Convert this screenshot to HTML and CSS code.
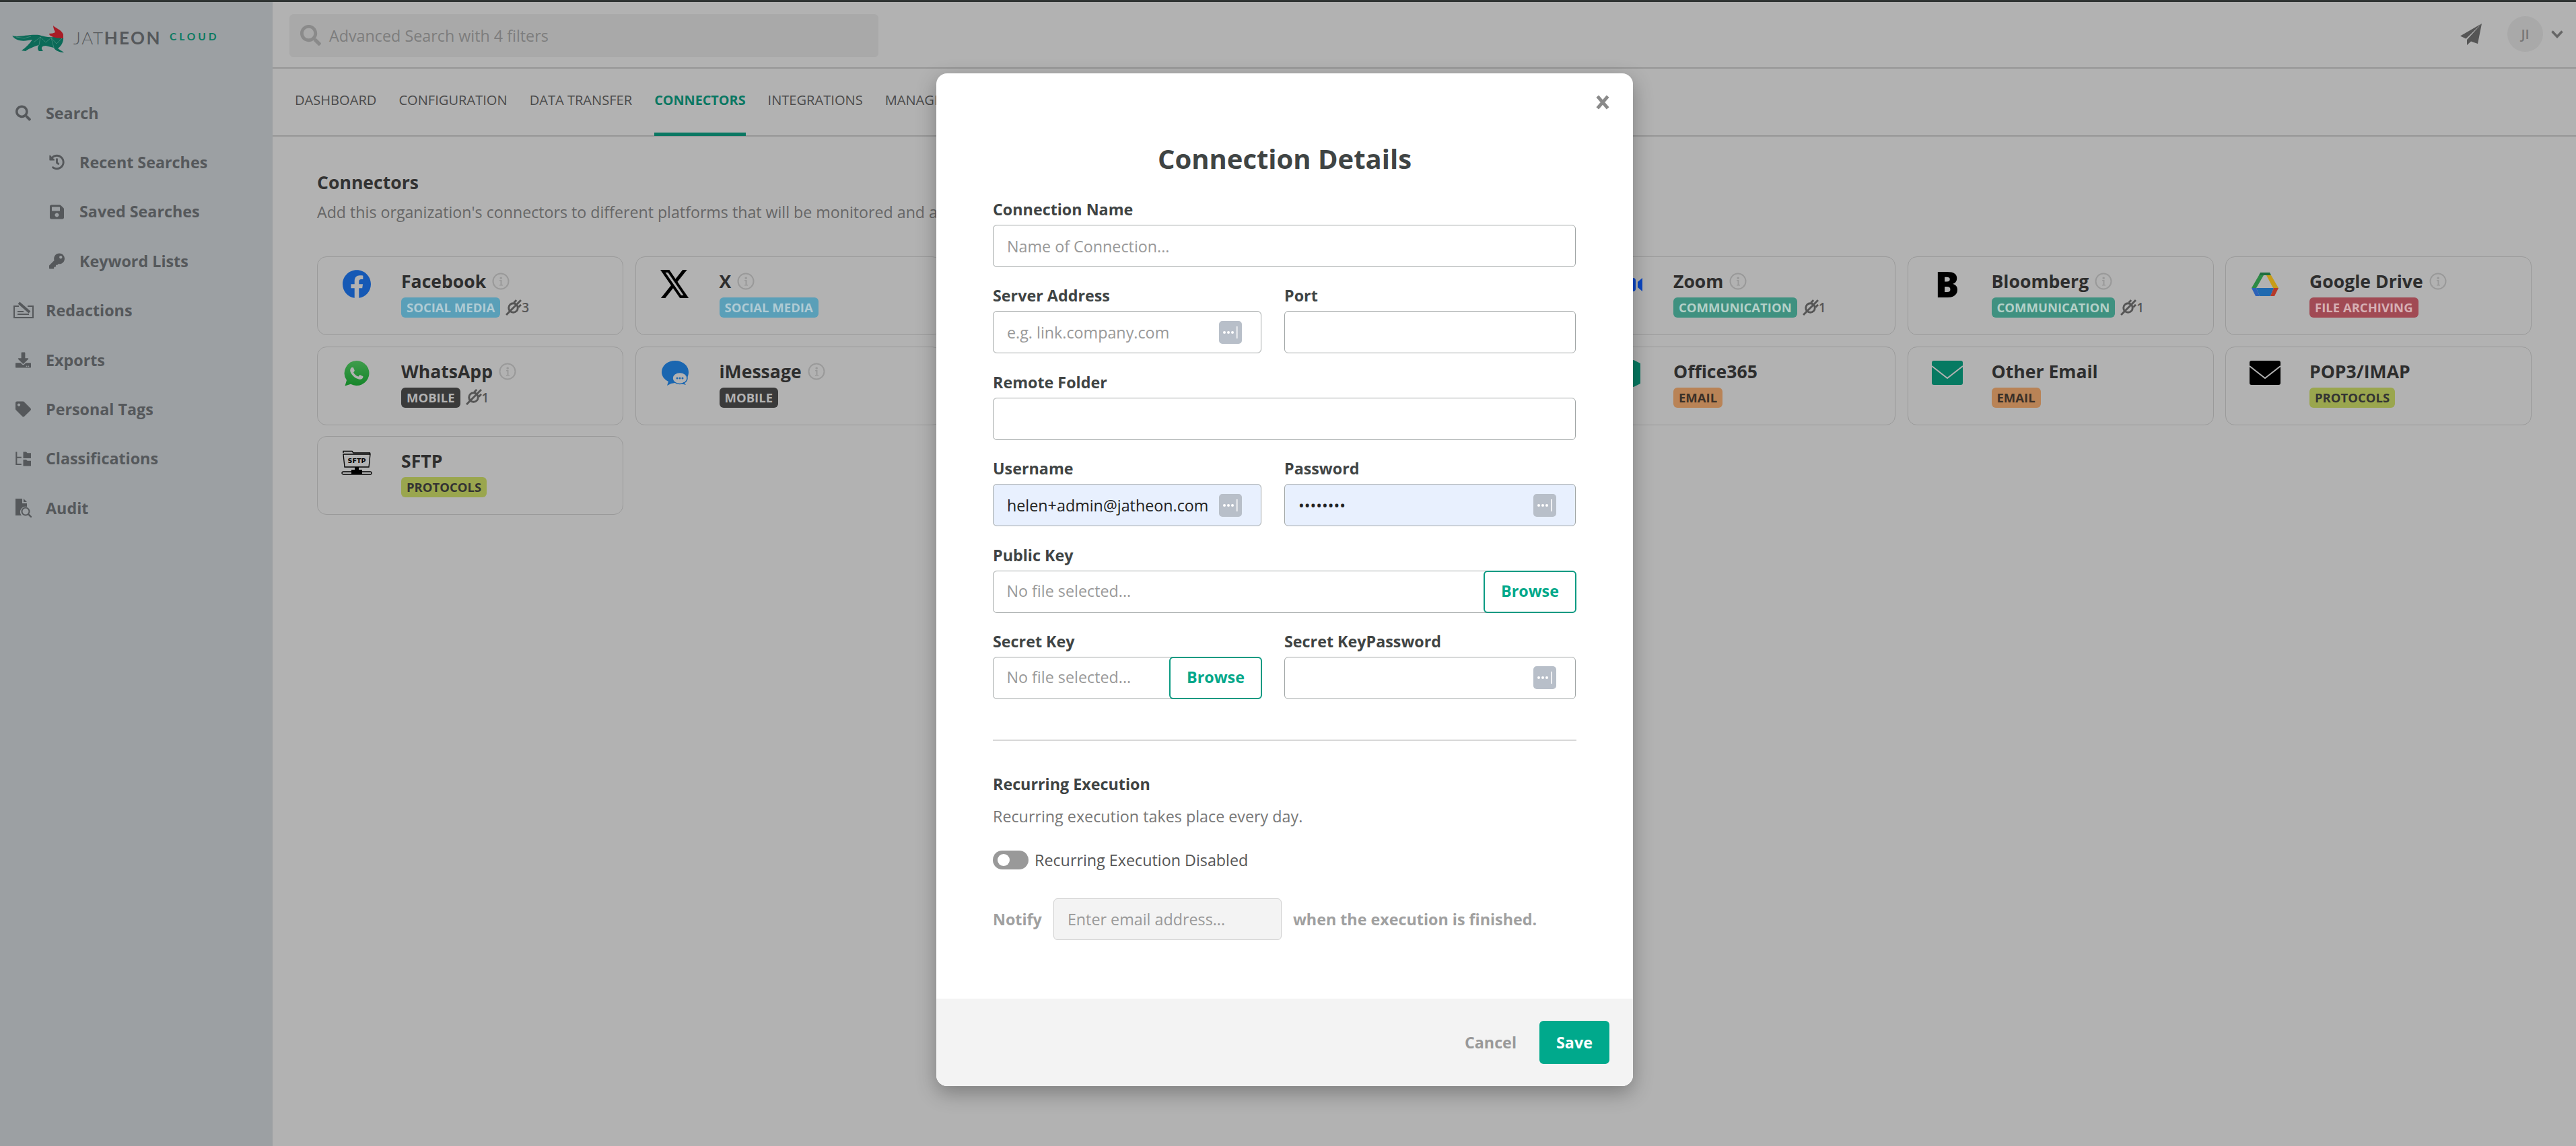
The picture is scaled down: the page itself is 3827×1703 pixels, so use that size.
FILE: index.html
```html
<!DOCTYPE html>
<html lang="en">
<head>
<meta charset="utf-8">
<title>Connectors</title>
<link rel="stylesheet" href="styles.css">
</head>
<body>
<div class="stripe"></div>
<div class="layout">
  <aside class="sidebar">
    <div class="logo">
      <svg class="fox" viewBox="18 36 78 42">
        <path fill="#0c6a58" d="M18 52C28 55 40 50 58 51C65 53 72 55 80 54L94 54C95 62 90 68 86 71C90 74 93 75 95 77C88 77 82 74 80 70L68 67C62 67 60 70 64 75L58 75C55 72 56 68 58 66C50 68 42 72 38 75L32 74C38 70 44 64 48 58C38 60 25 62 18 52Z"/>
        <path fill="none" stroke="#5f9a8c" stroke-width=".6" d="M24 54L36 56L46 53M50 62L60 54L68 62L76 55L84 64L92 56M60 54L58 66M76 55L80 70"/>
        <path fill="#a81c26" d="M79 37C84 42 90 42 94 50L94 56C88 56 82 55 79 54C76 53 73 51 73 49C77 49 80 48 82 47C81 44 79 41 79 37Z"/>
      </svg>
      <span class="brand"><span class="brand-thin">JAT</span>HEON</span>
      <span class="cloud">CLOUD</span>
    </div>
    <nav class="nav">
      <a class="nav-item"><svg class="nav-icon" viewBox="0 0 512 512"><path d="M505 442.7L405.3 343c-4.5-4.5-10.6-7-17-7H372c27.6-35.3 44-79.7 44-128C416 93.1 322.9 0 208 0S0 93.1 0 208s93.1 208 208 208c48.3 0 92.7-16.4 128-44v16.3c0 6.4 2.5 12.5 7 17l99.7 99.7c9.4 9.4 24.6 9.4 33.9 0l28.3-28.3c9.4-9.4 9.4-24.6.1-34zM208 336c-70.7 0-128-57.2-128-128 0-70.7 57.2-128 128-128 70.7 0 128 57.2 128 128 0 70.7-57.2 128-128 128z"/></svg>Search</a>
      <a class="nav-item sub"><svg class="nav-icon" viewBox="0 0 512 512"><path d="M504 255.531c.253 136.64-111.18 248.372-247.82 248.468-59.015.042-113.223-20.53-155.822-54.911-11.077-8.94-11.905-25.541-1.839-35.607l11.267-11.267c8.609-8.609 22.353-9.551 31.891-1.984C173.062 425.135 212.781 440 256 440c101.705 0 184-82.311 184-184 0-101.705-82.311-184-184-184-48.814 0-93.149 18.969-126.068 49.932l50.754 50.754c10.08 10.08 2.941 27.314-11.313 27.314H24c-8.837 0-16-7.163-16-16V38.627c0-14.254 17.234-21.393 27.314-11.314l49.372 49.372C129.209 34.136 189.552 8 256 8c136.81 0 247.747 110.78 248 247.531zm-180.912 78.784l9.823-12.63c8.138-10.463 6.253-25.542-4.21-33.679L288 256.349V152c0-13.255-10.745-24-24-24h-16c-13.255 0-24 10.745-24 24v135.651l65.409 50.874c10.463 8.137 25.541 6.253 33.679-4.21z"/></svg>Recent Searches</a>
      <a class="nav-item sub"><svg class="nav-icon" viewBox="0 0 448 512"><path d="M433.941 129.941l-83.882-83.882A48 48 0 0 0 316.118 32H48C21.49 32 0 53.49 0 80v352c0 26.51 21.49 48 48 48h352c26.51 0 48-21.49 48-48V163.882a48 48 0 0 0-14.059-33.941zM224 416c-35.346 0-64-28.654-64-64 0-35.346 28.654-64 64-64s64 28.654 64 64c0 35.346-28.654 64-64 64zm96-304.52V212c0 6.627-5.373 12-12 12H76c-6.627 0-12-5.373-12-12V108c0-6.627 5.373-12 12-12h228.52c3.183 0 6.235 1.264 8.485 3.515l3.48 3.48A11.996 11.996 0 0 1 320 111.48z"/></svg>Saved Searches</a>
      <a class="nav-item sub"><svg class="nav-icon" viewBox="0 0 512 512"><path d="M512 176.001C512 273.203 433.202 352 336 352c-11.22 0-22.19-1.062-32.827-3.069l-24.012 27.014A23.999 23.999 0 0 1 261.223 384H224v40c0 13.255-10.745 24-24 24h-40v40c0 13.255-10.745 24-24 24H24c-13.255 0-24-10.745-24-24v-78.059c0-6.365 2.529-12.47 7.029-16.971l161.802-161.802C163.108 213.814 160 195.271 160 176 160 78.798 238.797.001 335.999 0 433.488-.001 512 78.511 512 176.001zM336 128c0 26.51 21.49 48 48 48s48-21.49 48-48-21.49-48-48-48-48 21.49-48 48z"/></svg>Keyword Lists</a>
      <a class="nav-item"><svg class="nav-icon wide" viewBox="0 0 30 26"><path fill="none" stroke="#55585b" stroke-width="2" d="M8 8H1v17h28V8h-8"/><path fill="none" stroke="#55585b" stroke-width="4" d="M8 3L24 17"/><path fill="none" stroke="#55585b" stroke-width="2" d="M6 16h9M6 20h17"/></svg>Redactions</a>
      <a class="nav-item"><svg class="nav-icon" viewBox="0 0 512 512"><path d="M216 0h80c13.3 0 24 10.7 24 24v168h87.7c17.8 0 26.7 21.5 14.1 34.1L269.7 378.3c-7.5 7.5-19.8 7.5-27.3 0L90.1 226.1c-12.6-12.6-3.7-34.1 14.1-34.1H192V24c0-13.3 10.7-24 24-24zm296 376v112c0 13.3-10.7 24-24 24H24c-13.3 0-24-10.7-24-24V376c0-13.3 10.7-24 24-24h146.7l49 49c20.1 20.1 52.5 20.1 72.6 0l49-49H488c13.3 0 24 10.7 24 24zm-124 88c0-11-9-20-20-20s-20 9-20 20 9 20 20 20 20-9 20-20zm64 0c0-11-9-20-20-20s-20 9-20 20 9 20 20 20 20-9 20-20z"/></svg>Exports</a>
      <a class="nav-item"><svg class="nav-icon" viewBox="0 0 512 512"><path d="M0 252.118V48C0 21.49 21.49 0 48 0h204.118a48 48 0 0 1 33.941 14.059l211.882 211.882c18.745 18.745 18.745 49.137 0 67.882L293.823 497.941c-18.745 18.745-49.137 18.745-67.882 0L14.059 286.059A48 48 0 0 1 0 252.118zM112 64c-26.51 0-48 21.49-48 48s21.49 48 48 48 48-21.49 48-48-21.49-48-48-48z"/></svg>Personal Tags</a>
      <a class="nav-item"><svg class="nav-icon" viewBox="0 0 26 24"><path fill="none" stroke="#55585b" stroke-width="2.4" d="M1.5 0V21H10M1.5 9.5H10"/><path d="M13 0h5l2 2h6v9H13zM13 13h5l2 2h6v9H13z"/></svg>Classifications</a>
      <a class="nav-item"><svg class="nav-icon tall" viewBox="0 0 24 28"><path d="M0 0h10v7h7v5a8 8 0 0 0-8 13H0zM12 0l5 5h-5z"/><circle cx="15" cy="19" r="5.5" fill="none" stroke="#55585b" stroke-width="2"/><path fill="none" stroke="#55585b" stroke-width="2.4" d="M19 23l5 5"/></svg>Audit</a>
    </nav>
  </aside>

  <main class="main">
    <header class="topbar">
      <div class="search">
        <svg class="search-icon" viewBox="0 0 512 512"><path d="M505 442.7L405.3 343c-4.5-4.5-10.6-7-17-7H372c27.6-35.3 44-79.7 44-128C416 93.1 322.9 0 208 0S0 93.1 0 208s93.1 208 208 208c48.3 0 92.7-16.4 128-44v16.3c0 6.4 2.5 12.5 7 17l99.7 99.7c9.4 9.4 24.6 9.4 33.9 0l28.3-28.3c9.4-9.4 9.4-24.6.1-34zM208 336c-70.7 0-128-57.2-128-128 0-70.7 57.2-128 128-128 70.7 0 128 57.2 128 128 0 70.7-57.2 128-128 128z"/></svg>
        <span>Advanced Search with 4 filters</span>
      </div>
      <div class="top-right">
        <svg class="plane" viewBox="0 0 32 32"><path d="M32 0L0 18.5l8.5 4zM32 0L10 24v8l6-5.5 10 3.5z"/></svg>
        <span class="avatar">JI</span>
        <svg class="chev" viewBox="0 0 18 12"><path d="M1.5 1.5L9 9.5l7.500-8"/></svg>
      </div>
    </header>
    <nav class="tabs">
      <a class="tab">DASHBOARD</a>
      <a class="tab">CONFIGURATION</a>
      <a class="tab">DATA TRANSFER</a>
      <a class="tab active">CONNECTORS</a>
      <a class="tab">INTEGRATIONS</a>
      <a class="tab">MANAGEMENT</a>
    </nav>
    <section class="content">
      <h2 class="page-title">Connectors</h2>
      <p class="page-desc">Add this organization's connectors to different platforms that will be monitored and archived.</p>
      <div class="cards">
        <article class="card">
          <div class="card-icon"><svg class="logo-fb" viewBox="0 0 24 24"><path d="M24 12.073c0-6.627-5.373-12-12-12s-12 5.373-12 12c0 5.99 4.388 10.954 10.125 11.854v-8.385H7.078v-3.47h3.047V9.430c0-3.007 1.792-4.669 4.533-4.669 1.312 0 2.686.235 2.686.235v2.953H15.830c-1.491 0-1.956.925-1.956 1.874v2.25h3.328l-.532 3.47h-2.796v8.385C19.612 23.027 24 18.062 24 12.073z"/></svg></div>
          <div class="card-body">
            <div class="card-name">Facebook<svg class="info" viewBox="0 0 26 26"><circle cx="13" cy="13" r="11.500"/><path d="M11 11h3.500v7H16v1.500h-5V18h1.500v-5.500H11zM13.200 6.500a1.800 1.800 0 1 1 0 3.600 1.800 1.800 0 0 1 0-3.600z"/></svg></div>
            <div class="card-meta"><span class="badge social">SOCIAL MEDIA</span><span class="plug"><svg viewBox="0 0 24 24"><circle cx="12" cy="12" r="6.500"/><path d="M2 22l5-5M17.500 6.500L23 1M5 19L19 5M13 4.500L16.500 1M19.500 11L23 7.500"/></svg>3</span></div>
          </div>
        </article>
        <article class="card">
          <div class="card-icon"><svg class="logo-x" viewBox="1.250 2.250 21.500 19.500" preserveAspectRatio="none"><path d="M18.244 2.250h3.308l-7.227 8.260 8.502 11.240H16.170l-5.214-6.817L4.990 21.750H1.680l7.730-8.835L1.254 2.250H8.080l4.713 6.231zm-1.161 17.520h1.833L7.084 4.126H5.117z"/></svg></div>
          <div class="card-body">
            <div class="card-name">X<svg class="info" viewBox="0 0 26 26"><circle cx="13" cy="13" r="11.500"/><path d="M11 11h3.500v7H16v1.500h-5V18h1.500v-5.500H11zM13.200 6.500a1.800 1.800 0 1 1 0 3.600 1.800 1.800 0 0 1 0-3.600z"/></svg></div>
            <div class="card-meta"><span class="badge social">SOCIAL MEDIA</span></div>
          </div>
        </article>
        <article class="card"></article>
        <article class="card"></article>
        <article class="card">
          <div class="card-icon"><svg class="logo-zoom" viewBox="0 0 42 22"><rect x="0" y="1" width="31" height="20" rx="4"/><path d="M34 7l7-6v20l-7-6z"/></svg></div>
          <div class="card-body">
            <div class="card-name">Zoom<svg class="info" viewBox="0 0 26 26"><circle cx="13" cy="13" r="11.500"/><path d="M11 11h3.500v7H16v1.500h-5V18h1.500v-5.500H11zM13.200 6.500a1.800 1.800 0 1 1 0 3.600 1.800 1.800 0 0 1 0-3.600z"/></svg></div>
            <div class="card-meta"><span class="badge comm">COMMUNICATION</span><span class="plug"><svg viewBox="0 0 24 24"><circle cx="12" cy="12" r="6.500"/><path d="M2 22l5-5M17.500 6.500L23 1M5 19L19 5M13 4.500L16.500 1M19.500 11L23 7.500"/></svg>1</span></div>
          </div>
        </article>
        <article class="card">
          <div class="card-icon"><span class="logo-b">B</span></div>
          <div class="card-body">
            <div class="card-name">Bloomberg<svg class="info" viewBox="0 0 26 26"><circle cx="13" cy="13" r="11.500"/><path d="M11 11h3.500v7H16v1.500h-5V18h1.500v-5.500H11zM13.200 6.500a1.800 1.800 0 1 1 0 3.600 1.800 1.800 0 0 1 0-3.600z"/></svg></div>
            <div class="card-meta"><span class="badge comm">COMMUNICATION</span><span class="plug"><svg viewBox="0 0 24 24"><circle cx="12" cy="12" r="6.500"/><path d="M2 22l5-5M17.500 6.500L23 1M5 19L19 5M13 4.500L16.500 1M19.500 11L23 7.500"/></svg>1</span></div>
          </div>
        </article>
        <article class="card">
          <div class="card-icon"><svg class="logo-drive" viewBox="0 0 40 35">
            <path fill="#1f6e3e" d="M13 0h14l2 4H11z"/><path fill="#2c8a45" d="M11 4h7L7 23 0 23z"/><path fill="#c89c18" d="M22 4h7l11 19h-8z"/><path fill="#1f6ab0" d="M7 23h26l-5 12H12z"/><path fill="#2c62b8" d="M0 23h7l5 12H6z"/><path fill="#b53a2a" d="M33 23h7l-6 12h-6z"/><path fill="#b2b2b2" d="M20 6l10 17H10z"/>
          </svg></div>
          <div class="card-body">
            <div class="card-name">Google Drive<svg class="info" viewBox="0 0 26 26"><circle cx="13" cy="13" r="11.500"/><path d="M11 11h3.500v7H16v1.500h-5V18h1.500v-5.500H11zM13.200 6.500a1.800 1.800 0 1 1 0 3.600 1.800 1.800 0 0 1 0-3.600z"/></svg></div>
            <div class="card-meta"><span class="badge archive">FILE ARCHIVING</span></div>
          </div>
        </article>

        <article class="card">
          <div class="card-icon"><svg class="logo-wa" viewBox="0 0 38 38"><defs><linearGradient id="wa" x1="0" y1="0" x2="0" y2="1"><stop offset="0" stop-color="#3f9c4c"/><stop offset="1" stop-color="#16862a"/></linearGradient></defs><path fill="url(#wa)" d="M19 0a18.500 18.500 0 1 1-9 34.700L1.500 37.500 4 29A18.500 18.500 0 0 1 19 0z"/><path fill="#b2b2b2" d="M27.400 22.700c-.5-.2-2.800-1.400-3.200-1.500-.4-.2-.7-.2-1 .2-.3.500-1.200 1.500-1.500 1.800-.3.300-.5.400-1 .1-.5-.2-2-.7-3.800-2.300-1.400-1.200-2.300-2.800-2.600-3.300-.3-.5 0-.7.200-1 .2-.2.500-.5.700-.8.200-.3.300-.5.500-.8.200-.3.100-.6 0-.8-.1-.2-1.100-2.600-1.500-3.500-.4-.9-.8-.8-1.100-.8h-.9c-.3 0-.8.100-1.300.6-.4.500-1.700 1.600-1.700 3.900 0 2.300 1.700 4.600 1.900 4.900.2.300 3.300 5.100 8.100 7.100 1.100.5 2 .8 2.700 1 1.100.4 2.200.3 3 .2.900-.1 2.800-1.100 3.200-2.200.4-1.100.4-2 .3-2.200-.1-.2-.4-.3-.9-.6z"/></svg></div>
          <div class="card-body">
            <div class="card-name">WhatsApp<svg class="info" viewBox="0 0 26 26"><circle cx="13" cy="13" r="11.500"/><path d="M11 11h3.500v7H16v1.500h-5V18h1.500v-5.500H11zM13.200 6.500a1.800 1.800 0 1 1 0 3.600 1.800 1.800 0 0 1 0-3.600z"/></svg></div>
            <div class="card-meta"><span class="badge mobile">MOBILE</span><span class="plug"><svg viewBox="0 0 24 24"><circle cx="12" cy="12" r="6.500"/><path d="M2 22l5-5M17.500 6.500L23 1M5 19L19 5M13 4.500L16.500 1M19.500 11L23 7.500"/></svg>1</span></div>
          </div>
        </article>
        <article class="card">
          <div class="card-icon"><svg class="logo-im" viewBox="0 0 40 38"><path fill="#1a66b0" d="M20 0c11 0 20 7 20 17 0 6-3 11-8 14l-18 3-6 3 2-6C4 28 0 23 0 17 0 7 9 0 20 0z"/><ellipse cx="27" cy="26" rx="11" ry="8.500" fill="#b2b2b2" stroke="#1a66b0" stroke-width="1.500"/><path fill="#1a66b0" d="M33 32l3 4-7-2z"/><circle cx="23" cy="26" r="1.500" fill="#1a66b0"/><circle cx="27" cy="26" r="1.500" fill="#1a66b0"/><circle cx="31" cy="26" r="1.500" fill="#1a66b0"/></svg></div>
          <div class="card-body">
            <div class="card-name">iMessage<svg class="info" viewBox="0 0 26 26"><circle cx="13" cy="13" r="11.500"/><path d="M11 11h3.500v7H16v1.500h-5V18h1.500v-5.500H11zM13.200 6.500a1.800 1.800 0 1 1 0 3.600 1.800 1.800 0 0 1 0-3.600z"/></svg></div>
            <div class="card-meta"><span class="badge mobile">MOBILE</span></div>
          </div>
        </article>
        <article class="card"></article>
        <article class="card"></article>
        <article class="card">
          <div class="card-icon"><svg class="logo-o365" viewBox="0 0 34 40"><path d="M0 6L24 0l10 5v30l-10 5L0 34z"/></svg></div>
          <div class="card-body">
            <div class="card-name">Office365</div>
            <div class="card-meta"><span class="badge email">EMAIL</span></div>
          </div>
        </article>
        <article class="card">
          <div class="card-icon"><svg class="logo-mail teal" viewBox="0 0 46 36"><rect width="46" height="36" rx="3"/><path class="flap" d="M0 8l23 18L46 8"/></svg></div>
          <div class="card-body">
            <div class="card-name">Other Email</div>
            <div class="card-meta"><span class="badge email">EMAIL</span></div>
          </div>
        </article>
        <article class="card">
          <div class="card-icon"><svg class="logo-mail" viewBox="0 0 46 36"><rect width="46" height="36" rx="3"/><path class="flap" d="M0 8l23 18L46 8"/></svg></div>
          <div class="card-body">
            <div class="card-name">POP3/IMAP</div>
            <div class="card-meta"><span class="badge proto">PROTOCOLS</span></div>
          </div>
        </article>

        <article class="card">
          <div class="card-icon"><svg class="logo-sftp" viewBox="0 0 46 40"><path fill="none" stroke="#000" stroke-width="1.300" d="M3 5V2.500h13l2 2.500h24.500l.5 2M3 7h40l-2 19H5z"/><text x="23" y="20" text-anchor="middle" class="sftp-text">SFTP</text><path d="M20 26h6v4h5v6H15v-6h5z"/><rect x="1" y="33" width="44" height="4" rx="2" fill="none" stroke="#000" stroke-width="1.300"/></svg></div>
          <div class="card-body">
            <div class="card-name">SFTP</div>
            <div class="card-meta"><span class="badge proto">PROTOCOLS</span></div>
          </div>
        </article>
      </div>
    </section>
  </main>
</div>

<div class="modal">
  <button class="close" type="button" aria-label="Close"><svg viewBox="0 0 20 20"><path d="M3 2l14 16M17 2L3 18"/></svg></button>
  <div class="modal-body">
    <h1 class="modal-title">Connection Details</h1>
    <div class="field-row one">
      <div class="field"><label>Connection Name</label><input class="ctl" placeholder="Name of Connection..."></div>
    </div>
    <div class="field-row">
      <div class="field"><label>Server Address</label><div class="pm-wrap"><input class="ctl" placeholder="e.g. link.company.com"><span class="pm"><svg viewBox="0 0 34 34"><circle cx="8" cy="17" r="2"/><circle cx="14" cy="17" r="2"/><circle cx="20" cy="17" r="2"/><rect x="26" y="8" width="1.500" height="18"/></svg></span></div></div>
      <div class="field"><label>Port</label><input class="ctl"></div>
    </div>
    <div class="field-row one">
      <div class="field"><label>Remote Folder</label><input class="ctl"></div>
    </div>
    <div class="field-row">
      <div class="field"><label>Username</label><div class="pm-wrap"><input class="ctl filled" value="helen+admin@jatheon.com"><span class="pm"><svg viewBox="0 0 34 34"><circle cx="8" cy="17" r="2"/><circle cx="14" cy="17" r="2"/><circle cx="20" cy="17" r="2"/><rect x="26" y="8" width="1.500" height="18"/></svg></span></div></div>
      <div class="field"><label>Password</label><div class="pm-wrap"><input class="ctl filled" type="password" value="password"><span class="pm"><svg viewBox="0 0 34 34"><circle cx="8" cy="17" r="2"/><circle cx="14" cy="17" r="2"/><circle cx="20" cy="17" r="2"/><rect x="26" y="8" width="1.500" height="18"/></svg></span></div></div>
    </div>
    <div class="field-row one">
      <div class="field"><label>Public Key</label><div class="file"><span class="file-name">No file selected...</span><button class="browse" type="button">Browse</button></div></div>
    </div>
    <div class="field-row last">
      <div class="field"><label>Secret Key</label><div class="file"><span class="file-name">No file selected...</span><button class="browse" type="button">Browse</button></div></div>
      <div class="field"><label>Secret KeyPassword</label><div class="pm-wrap"><input class="ctl"><span class="pm"><svg viewBox="0 0 34 34"><circle cx="8" cy="17" r="2"/><circle cx="14" cy="17" r="2"/><circle cx="20" cy="17" r="2"/><rect x="26" y="8" width="1.500" height="18"/></svg></span></div></div>
    </div>
    <hr class="divider">
    <h3 class="section-title">Recurring Execution</h3>
    <p class="section-desc">Recurring execution takes place every day.</p>
    <div class="toggle-row"><span class="toggle"><span class="knob"></span></span><span class="toggle-label">Recurring Execution Disabled</span></div>
    <div class="notify-row"><span class="muted">Notify</span><input class="ctl notify" placeholder="Enter email address..." disabled><span class="muted">when the execution is finished.</span></div>
  </div>
  <footer class="modal-footer">
    <button class="cancel" type="button">Cancel</button>
    <button class="save" type="button">Save</button>
  </footer>
</div>
</body>
</html>
```
FILE: styles.css
```css
* { box-sizing: border-box; }
html, body { margin: 0; padding: 0; height: 1703px; overflow: hidden; }
body { font-family: "Open Sans", "Liberation Sans", sans-serif; background: #b2b2b2; color: #2e2e2e; position: relative; }
a { text-decoration: none; }
h1, h2, h3, p { margin: 0; }

.stripe { height: 3px; background: #2f3433; }
.layout { display: flex; height: 1700px; }

.sidebar { width: 405px; flex: none; background: #9ca0a3; }
.logo { height: 128px; display: flex; align-items: flex-start; padding: 34px 0 0 18px; }
.fox { width: 78px; height: 42px; flex: none; }
.brand { font-family: Lato, "Open Sans", sans-serif; font-weight: 700; font-size: 26px; line-height: 26px; letter-spacing: 2.4px; color: #55585b; margin: 6px 0 0 13px; }
.brand-thin { font-weight: 300; letter-spacing: 1.6px; }
.cloud { font-family: Lato, "Open Sans", sans-serif; font-weight: 700; font-size: 15.500px; line-height: 15px; letter-spacing: 4px; color: #0c7a62; margin: 10px 0 0 12px; }

.nav { display: flex; flex-direction: column; }
.nav-item { height: 73.4px; display: flex; align-items: center; padding-left: 68px; position: relative; font-size: 23.300px; font-weight: 700; color: #55585b; }
.nav-item.sub { padding-left: 118px; }
.nav-icon { position: absolute; left: 23px; top: 25px; width: 23px; height: 24px; fill: #55585b; }
.nav-item.sub .nav-icon { left: 73px; }
.nav-icon.wide { left: 20px; top: 22px; width: 30px; height: 26px; }
.nav-icon.tall { top: 23px; width: 24px; height: 28px; }

.main { flex: 1; min-width: 0; display: flex; flex-direction: column; }
.topbar { height: 99px; flex: none; display: flex; align-items: center; justify-content: space-between; padding: 0 19px 0 25px; border-bottom: 2px solid #969696; }
.search { width: 875px; height: 64px; display: flex; align-items: center; padding-left: 16px; margin-top: 2px; background: #a9a9a9; border-radius: 6px; font-size: 23.300px; color: #7d7d7d; }
.search-icon { width: 31px; height: 31px; fill: #8a8a8a; margin-right: 12px; }
.top-right { display: flex; align-items: center; margin-top: -2px; }
.plane { width: 32px; height: 32px; fill: #555; margin-right: 38px; }
.avatar { width: 53px; height: 53px; border-radius: 50%; background: #a9a9a9; color: #777; font-size: 20px; font-weight: 600; display: flex; align-items: center; justify-content: center; }
.chev { width: 18px; height: 12px; margin-left: 12px; fill: none; stroke: #666; stroke-width: 3.500; }

.tabs { height: 101px; flex: none; display: flex; gap: 33px; padding-left: 33px; border-bottom: 2px solid #969696; }
.tab { height: 100px; display: flex; align-items: center; padding-bottom: 3px; font-size: 20.100px; color: #4a4a4a; border-bottom: 5px solid transparent; }
.tab.active { color: #0a7762; font-size: 19.800px; font-weight: 700; border-bottom-color: #0a7762; }

.content { padding: 50px 66px 0; }
.page-title { font-size: 26.600px; line-height: 36px; font-weight: 700; color: #333; }
.page-desc { font-size: 23.200px; line-height: 34px; margin-top: 9px; color: #666; white-space: nowrap; }
.cards { display: grid; grid-template-columns: repeat(7, 1fr); grid-auto-rows: 117px; column-gap: 17.500px; row-gap: 16.500px; margin-top: 49px; }
.card { border: 1.500px solid #9a9a9a; border-radius: 14px; display: flex; padding-top: 19px; }
.card-icon { width: 116px; flex: none; display: flex; justify-content: center; align-items: flex-start; }
.card-body { margin-left: 8px; }
.card-name { display: flex; align-items: center; height: 34px; margin-top: 0; font-size: 26.600px; font-weight: 700; color: #2e2e2e; white-space: nowrap; }
.info { width: 26px; height: 26px; margin-left: 9px; fill: #999; }
.info circle { fill: none; stroke: #999; stroke-width: 2; }
.card-meta { display: flex; align-items: center; margin-top: 7px; }
.badge { height: 30px; padding: 0 8px; border-radius: 6px; font-size: 18.500px; line-height: 30px; font-weight: 700; white-space: nowrap; }
.social { background: #5a9fb8; color: #b0cbd4; }
.mobile { background: #3a3a3a; color: #b2b2b2; }
.proto { background: #9aa64e; color: #333; }
.comm { background: #3f9180; color: #b4d0c8; }
.archive { background: #a14a54; color: #d6b0b4; }
.email { background: #b98356; color: #3a3028; }
.plug { display: flex; align-items: center; margin-left: 7px; font-size: 19px; font-weight: 600; color: #555; }
.plug svg { width: 25px; height: 25px; fill: none; stroke: #555; stroke-width: 2.800; }

.logo-fb { width: 42px; height: 42px; fill: #1659b5; }
.logo-x { width: 42px; height: 42px; margin-left: -2px; fill: #000; }
.logo-zoom { width: 42px; height: 22px; margin-top: 11px; fill: #0b47c4; }
.logo-b { font-family: "Open Sans", sans-serif; font-weight: 800; font-size: 53px; line-height: 42px; color: #000; }
.logo-drive { width: 40px; height: 35px; margin-top: 4px; }
.logo-wa { width: 38px; height: 38px; margin-top: 1.500px; }
.logo-im { width: 40px; height: 38px; margin-top: 1.500px; }
.logo-o365 { width: 34px; height: 40px; margin-top: 0; fill: #067a62; }
.logo-mail { width: 46px; height: 36px; margin-top: 1.500px; fill: #000; }
.logo-mail.teal { fill: #067a62; }
.flap { fill: none; stroke: #b2b2b2; stroke-width: 2; }
.logo-sftp { width: 46px; height: 40px; }
.sftp-text { font-family: "DejaVu Sans", sans-serif; font-weight: 700; font-size: 9.500px; fill: #000; }

.modal { position: absolute; left: 1391px; top: 109px; width: 1035px; height: 1505px; background: #fff; border-radius: 16px; box-shadow: 0 10px 30px rgba(0,0,0,.3); display: flex; flex-direction: column; overflow: hidden; }
.close { position: absolute; right: 34px; top: 32px; width: 22px; height: 22px; padding: 0; border: 0; background: none; }
.close svg { display: block; width: 22px; height: 22px; fill: none; stroke: #8a8a8a; stroke-width: 4.500; }
.modal-body { flex: 1; padding: 100px 84px 0; }
.modal-title { font-size: 40px; line-height: 54px; font-weight: 700; text-align: center; color: #3f4444; margin-bottom: 31px; }
.field-row { display: grid; grid-template-columns: 399px 433px; column-gap: 34px; margin-bottom: 25.400px; }
.field-row.one { grid-template-columns: 866px; }
.field-row.last { margin-bottom: 60.500px; }
.field { min-width: 0; }
.field label { display: block; font-size: 23.300px; line-height: 34px; font-weight: 700; color: #3f4444; margin-bottom: 6px; }
.ctl { display: block; width: 100%; height: 63px; padding: 0 20px; border: 1.500px solid #a0a5a5; border-radius: 6px; background: #fff; font: 400 23.300px "Open Sans", sans-serif; color: #222; outline: 0; }
.ctl::placeholder { color: #999; opacity: 1; }
.ctl.filled { background: #e8f0fe; }
.pm-wrap { position: relative; }
.pm { position: absolute; right: 29px; top: 14.500px; width: 34px; height: 34px; background: #b8bfc9; border-radius: 5px; }
.pm svg { display: block; width: 34px; height: 34px; fill: #fff; }
.file { display: flex; height: 63px; border: 1.500px solid #a0a5a5; border-radius: 6px; align-items: center; position: relative; }
.file-name { flex: 1; padding: 0 0 2px 19.500px; font-size: 23.300px; color: #999; white-space: nowrap; overflow: hidden; }
.browse { width: 138px; height: 63px; flex: none; margin: -1.500px -2px -1.500px 0; border: 2px solid #0a9a82; border-radius: 6px; background: #fff; font: 700 23.300px "Open Sans", sans-serif; color: #02a88a; padding: 0 0 2px; }
.divider { border: 0; border-top: 2px solid #d8d8d8; margin: 0 0 46px; }
.section-title { font-size: 23.300px; line-height: 36px; font-weight: 700; color: #3f4444; }
.section-desc { font-size: 23.300px; line-height: 34px; margin-top: 12.500px; color: #777; }
.toggle-row { display: flex; align-items: center; height: 28px; margin-top: 34.500px; }
.toggle { width: 53px; height: 28px; border-radius: 14px; background: #999; padding: 5px 7px; flex: none; }
.knob { display: block; width: 18px; height: 18px; border-radius: 50%; background: #fff; }
.toggle-label { margin-left: 9px; font-size: 23.300px; color: #555; white-space: nowrap; }
.notify-row { display: flex; align-items: center; margin-top: 43px; }
.muted { font-size: 23.300px; font-weight: 700; color: #a0a0a0; white-space: nowrap; }
.ctl.notify { width: 339px; height: 62px; margin: 0 17px; background: #f3f3f3; border-color: #d0d0d0; flex: none; }
.modal-footer { height: 130px; flex: none; background: #f3f3f3; display: flex; align-items: center; justify-content: flex-end; padding-right: 35px; }
.cancel { border: 0; background: none; padding: 0; margin-right: 34px; font: 700 23.300px "Open Sans", sans-serif; color: #999; }
.save { width: 104px; height: 64px; border: 0; border-radius: 6px; background: #00a98c; color: #fff; font: 700 23.300px "Open Sans", sans-serif; padding: 0; }
```
